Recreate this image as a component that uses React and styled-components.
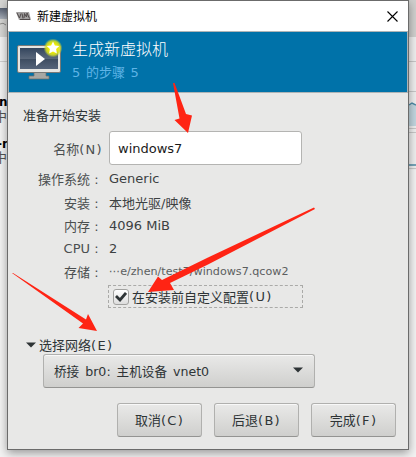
import React from 'react';
import styled, { createGlobalStyle } from 'styled-components';

const Global = createGlobalStyle`
  * { box-sizing: border-box; }
  html, body { margin: 0; overflow: hidden; }
  body { background: #f1f1f1; font-family: "DejaVu Sans", "Noto Sans CJK SC", sans-serif; }
`;

const Desktop = styled.div`
  position: relative;
  width: 416px;
  height: 457px;
  padding-left: 7px;
  overflow: hidden;
  background: #f3f3f3;
`;
const Backdrop = styled.svg`
  position: absolute;
  inset: 0;
`;
const Dialog = styled.section`
  position: relative;
  display: flex;
  flex-direction: column;
  width: 402px;
  height: 450px;
  border: 1px solid #6b6b6b;
  background: #e8e8e7;
  box-shadow: 0 3px 9px rgba(0, 0, 0, 0.38);
`;
const TitleBar = styled.header`
  display: flex;
  flex-shrink: 0;
  align-items: center;
  height: 30px;
  padding: 0 10px 0 8px;
  background: #fff;
`;
const Title = styled.div`
  flex: 1;
  margin-left: 6px;
  font: 12px/28px "Noto Sans CJK SC", sans-serif;
  color: #000;
`;
const Banner = styled.div`
  display: flex;
  flex-shrink: 0;
  height: 62px;
  border: 1px solid #aeb4b6;
  background: #0072a9;
  padding: 7px 0 0 8px;
`;
const BannerText = styled.div`
  margin: 2px 0 0 9px;
`;
const Heading = styled.div`
  font-size: 16px;
  line-height: 18px;
  font-weight: 300;
  color: #fff;
`;
const Step = styled.div`
  margin-top: 5px;
  font-size: 13px;
  line-height: 18px;
  word-spacing: 1.5px;
  color: #5fb4e6;
`;
const Body = styled.main`
  display: flex;
  flex-direction: column;
  flex: 1;
  padding: 14px 12px 12px 15px;
  font-size: 13px;
  color: #2e3436;
`;
const Intro = styled.div`
  line-height: 18px;
  height: 24px;
`;
const Form = styled.div`
  display: grid;
  grid-template-columns: 80px 194px;
  column-gap: 6px;
  grid-template-rows: 34px 26px repeat(4, 23px) 27px;
  align-items: center;
`;
const Label = styled.div`
  text-align: right;
  white-space: pre;
  color: #4b4f50;
`;
const Colon = styled.span`
  display: inline-block;
  width: 13px;
  text-align: center;
`;
const Value = styled.div`
  white-space: nowrap;
  font-size: ${p => (p.$small ? '11.15px' : '13px')};
  color: ${p => (p.$small ? '#5b5e5f' : '#3c4142')};
`;
const Input = styled.div`
  height: 34px;
  width: 193px;
  padding-left: 8px;
  border: 1px solid #b4b4b2;
  border-radius: 3px;
  background: #fff;
  line-height: 33px;
  color: #1b1b1b;
`;
const Check = styled.div`
  grid-column: 2;
  display: flex;
  align-items: center;
  height: 23px;
  margin-left: -1px;
  border: 1px dashed #aaaaa8;
  padding-left: 4px;
  white-space: nowrap;
`;
const CheckBox = styled.span`
  display: flex;
  align-items: center;
  justify-content: center;
  width: 16px;
  height: 16px;
  margin-right: 3px;
  border: 1px solid #a2a2a0;
  border-radius: 3px;
  background: linear-gradient(#fff, #ddd);
`;
const Mnemonic = styled.span`
  letter-spacing: 1.3px;
`;
const Expander = styled.div`
  display: flex;
  align-items: center;
  gap: 3px;
  height: 18px;
  margin: 26px 0 0 3px;
  line-height: 17px;
`;
const raised = `
  border: 1px solid #b0b0ae;
  border-bottom-color: #949492;
  border-radius: 3px;
  background: linear-gradient(#e9e9e8, #cfcfcd);
  box-shadow: inset 0 1px #f8f8f8;
  color: #2e3436;
`;
const Select = styled.div`
  ${raised}
  display: flex;
  align-items: center;
  justify-content: space-between;
  width: 272px;
  height: 34px;
  margin-left: 20px;
  padding: 0 11px 2px 10px;
  font-size: 12.6px;
  word-spacing: 2px;
`;
const Actions = styled.div`
  display: flex;
  justify-content: flex-end;
  gap: 12px;
  margin-top: 15px;
`;
const Button = styled.button`
  ${raised}
  width: 85px;
  height: 34px;
  padding: 0 0 2px;
  font: inherit;
  font-size: 13px;
`;
const Arrows = styled.svg`
  position: absolute;
  inset: 0;
`;

function DesktopEdges() {
  return (
    <Backdrop width="416" height="457">
      <defs>
        <linearGradient id="mon" x2="0" y2="1"><stop stopColor="#596273" /><stop offset="1" stopColor="#aab1bb" /></linearGradient>
      </defs>
      <rect width="8" height="37" fill="#d6d6d4" />
      <rect y="8" width="8" height="11" fill="url(#mon)" />
      <path d="M0 24Q3 22 6 25" fill="none" stroke="#8d8d8b" />
      <rect y="61" width="8" height="1" fill="#cfcfcf" />
      <rect x="409" width="7" height="37" fill="#d0d0ce" />
      <rect x="409" y="37" width="7" height="133" fill="#efefef" />
      <path d="M409 61.5h7M409 91.5h7M409 128.5h7M409 132.5h7M409 168.5h7" stroke="#c8c8c8" />
      <path d="M409 105l3-2 4 2v21h-7z" fill="#c2d6df" />
      <path d="M409 105l3-2 4 2M409 165h7" fill="none" stroke="#4f8ca7" strokeWidth="1.5" />
      <text x="-1" y="106" fontSize="12" fontWeight="bold">n</text>
      <text x="-6" y="121" fontSize="13" fill="#555">中</text>
      <text x="-3" y="148" fontSize="12" fontWeight="bold">-n</text>
      <text x="-6" y="162" fontSize="13" fill="#555">中</text>
    </Backdrop>
  );
}

const AppMark = () => (
  <svg width="15" height="10" viewBox="0 0 15 10">
    <path d="M0 1h13l2 8H3z" fill="#a2a0a0" />
    <path d="M1 2l2.500 5L5 2.500M6 2.500l1 5M8 7l.5-4.500L10.500 6l.5-4 2.500 5.500M4 8.500h10" fill="none" stroke="#504a4a" strokeWidth="1" />
  </svg>
);

const CloseMark = () => (
  <svg width="11" height="11" viewBox="0 0 11 11"><path d="M.5.5l10 10M10.500.5l-10 10" stroke="#000" strokeWidth="1.100" /></svg>
);

const Monitor = () => (
  <svg width="46" height="42" viewBox="0 0 46 42">
    <defs>
      <linearGradient id="screen" x2="0" y2="1"><stop stopColor="#34465e" /><stop offset=".5" stopColor="#5a677a" /><stop offset=".52" stopColor="#3d4c60" /><stop offset="1" stopColor="#56647a" /></linearGradient>
      <radialGradient id="glow"><stop offset=".45" stopColor="#f2ee00" /><stop offset=".75" stopColor="#d8e022" stopOpacity=".85" /><stop offset="1" stopColor="#b6cf44" stopOpacity="0" /></radialGradient>
    </defs>
    <path d="M17 33h12v4h3v3H12v-3h5z" fill="#a7a7a3" stroke="#6d6d69" strokeWidth=".7" />
    <rect x=".5" y="6.500" width="43" height="27" rx="1.500" fill="#e5e5e2" stroke="#787977" />
    <rect x="3" y="9" width="38" height="21" fill="url(#screen)" />
    <path d="M19 13l9 7-9 7z" fill="#fff" />
    <circle cx="36" cy="9" r="9.500" fill="url(#glow)" />
    <path d="M36 2.500l1.900 4 4.400.6-3.200 3 .8 4.400-3.900-2.100-3.900 2.100.8-4.400-3.200-3 4.400-.6z" fill="#fff" />
  </svg>
);

const Triangle = () => (
  <svg width="10" height="6" viewBox="0 0 10 6"><path d="M0 .5h10L5 5.500z" fill="#2e3436" /></svg>
);

const Field = ({ label, small, children }) => (
  <>
    <Label>{label}<Colon>:</Colon></Label>
    <Value $small={small}>{children}</Value>
  </>
);

export default function App() {
  return (
    <Desktop>
      <Global />
      <DesktopEdges />
      <Dialog>
        <TitleBar><AppMark /><Title>新建虚拟机</Title><CloseMark /></TitleBar>
        <Banner>
          <Monitor />
          <BannerText><Heading>生成新虚拟机</Heading><Step>5 的步骤 5</Step></BannerText>
        </Banner>
        <Body>
          <Intro>准备开始安装</Intro>
          <Form>
            <Label>名称<Mnemonic>(N)</Mnemonic></Label><Input>windows7</Input>
            <Field label="操作系统">Generic</Field>
            <Field label="安装">本地光驱/映像</Field>
            <Field label="内存">4096 MiB</Field>
            <Field label="CPU">2</Field>
            <Field label="存储" small>⋯e/zhen/test7/windows7.qcow2</Field>
            <Check>
              <CheckBox><svg width="12" height="11" viewBox="0 0 12 11"><path d="M1 5l4 4 6-7" fill="none" stroke="#2e3436" strokeWidth="2.800" /></svg></CheckBox>
              在安装前自定义配置<Mnemonic>(U)</Mnemonic>
            </Check>
          </Form>
          <Expander><Triangle /><span>选择网络<Mnemonic>(E)</Mnemonic></span></Expander>
          <Select><span>桥接 br0: 主机设备 vnet0</span><Triangle /></Select>
          <Actions>
            <Button>取消<Mnemonic>(C)</Mnemonic></Button>
            <Button>后退<Mnemonic>(B)</Mnemonic></Button>
            <Button>完成<Mnemonic>(F)</Mnemonic></Button>
          </Actions>
        </Body>
      </Dialog>
      <Arrows width="416" height="457" fill="#ff2414">
        <path d="M173 83L174.500 83 179 95 186 114 192 115.500 188 133 174.500 120 179.500 118.500Z" />
        <path d="M314 207.500L315 209 208 264.500 170 283 174 290 148 292 158 276.500 162 280 208 257.500Z" />
        <path d="M12 273L13 273 86 319.500 88 314 97 331 78.500 328 83 323.500Z" />
      </Arrows>
    </Desktop>
  );
}
